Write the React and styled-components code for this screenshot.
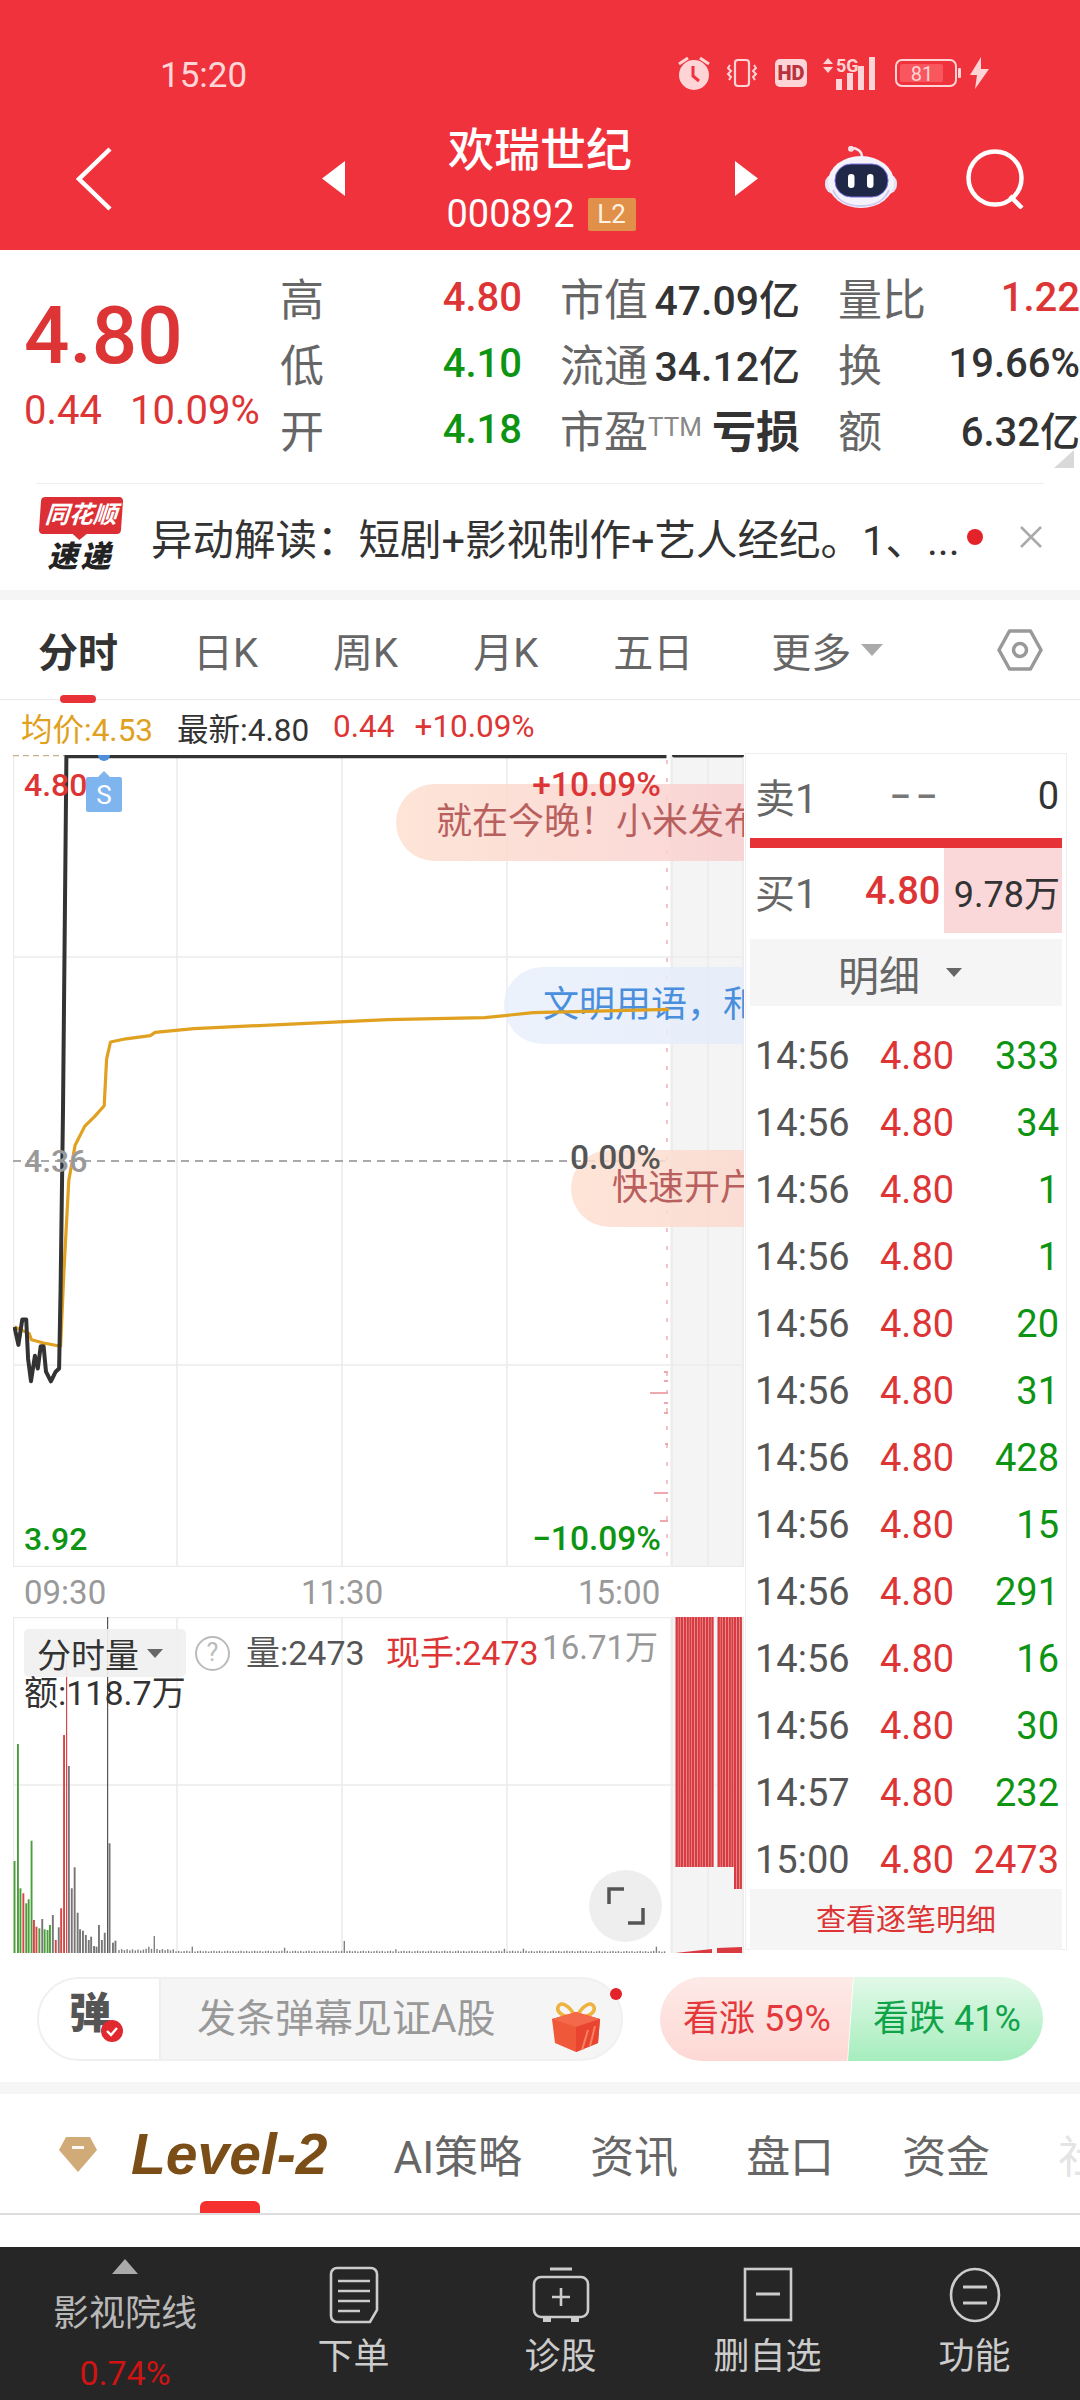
import React from "react";
import styled, { createGlobalStyle } from "styled-components";

const RED = "#dd3535";
const GREEN = "#0d9412";
const FONT = `Roboto, "Noto Sans CJK SC", sans-serif`;

const Global = createGlobalStyle`
  html, body { margin: 0; padding: 0; background: #fff; }
  body { width: 1080px; height: 2400px; overflow: hidden; font-family: ${FONT}; }
  * { box-sizing: border-box; }
`;

const Page = styled.div`
  width: 1080px;
  height: 2400px;
  display: flex;
  flex-direction: column;
  background: #fff;
  overflow: hidden;
`;

/* ---------- header ---------- */
const Header = styled.header`
  height: 250px;
  flex: none;
  background: #f0323c;
  color: #fff;
`;
const StatusBar = styled.div`
  height: 36px;
  margin-top: 55px;
  padding-left: 160px;
  display: flex;
  align-items: center;
`;
const StatusTime = styled.span`
  font-size: 35px;
  line-height: 36px;
  color: #ffd6d8;
  padding-top: 6px;
`;
const StatusIcons = styled.div`
  margin-left: 430px;
  display: flex;
  align-items: center;
`;
const NavBar = styled.div`
  height: 107px;
  margin-top: 34px;
  padding-left: 76px;
  display: flex;
  align-items: center;
`;
const TitleBlock = styled.div`
  width: 390px;
  display: flex;
  flex-direction: column;
  align-items: center;
`;
const Title = styled.div`
  font-size: 46px;
  line-height: 50px;
  font-weight: 500;
`;
const CodeRow = styled.div`
  margin-top: 21px;
  height: 36px;
  display: flex;
  align-items: center;
  gap: 13px;
  font-size: 38px;
  color: #fff;
  padding-left: 2px;
`;
const L2Badge = styled.span`
  width: 48px;
  height: 33px;
  background: #e09048;
  border-radius: 2px;
  font-size: 26px;
  line-height: 33px;
  text-align: center;
  color: #fff2e2;
`;
const NavSlot = styled.div`
  flex: none;
  margin-left: ${(p) => p.$ml || 0}px;
  display: flex;
`;

/* ---------- quote ---------- */
const Quote = styled.section`
  flex: none;
  height: 233px;
  padding-top: 14px;
  display: flex;
  position: relative;
  &::after {
    content: "";
    position: absolute;
    right: 6px;
    bottom: 15px;
    width: 20px;
    height: 18px;
    background: #d9d9d9;
    clip-path: polygon(100% 0, 100% 100%, 0 100%);
  }
`;
const PriceBlock = styled.div`
  width: 280px;
  flex: none;
  padding: 32px 0 0 24px;
  color: ${RED};
`;
const BigPrice = styled.div`
  font-size: 80px;
  line-height: 80px;
  font-weight: 500;
`;
const PriceSub = styled.div`
  margin-top: 15px;
  display: flex;
  gap: 28px;
  font-size: 40px;
  line-height: 40px;
  white-space: nowrap;
`;
const StatGrid = styled.div`
  flex: 1;
  display: grid;
  grid-template-columns: 242px 240px 242px;
  column-gap: 38px;
  grid-auto-rows: 66px;
`;
const Stat = styled.div`
  display: flex;
  justify-content: space-between;
  align-items: center;
  white-space: nowrap;
  overflow: visible;
`;
const StatLabel = styled.span`
  font-size: 44px;
  color: #666;
  sup {
    font-size: 26px;
    color: #888;
    vertical-align: 12px;
    line-height: 0;
  }
`;
const StatValue = styled.span`
  font-size: ${(p) => p.$size || 40}px;
  font-weight: ${(p) => p.$weight || 500};
  color: ${(p) => p.$color || "#333"};
`;
const Divider = styled.div`
  height: 1px;
  margin: 0 36px;
  background: #eee;
  flex: none;
`;
const News = styled.div`
  height: 106px;
  flex: none;
  padding-left: 36px;
  display: flex;
  align-items: center;
  position: relative;
`;
const NewsLogo = styled.div`
  width: 89px;
  height: 80px;
  flex: none;
  display: flex;
  flex-direction: column;
  align-items: center;
  margin-right: 26px;
`;
const LogoTop = styled.div`
  width: 82px;
  height: 37px;
  flex: none;
  position: relative;
  background: #dc2f35;
  border-radius: 4px;
  transform: skewX(-4deg);
  color: #fff;
  font-size: 24px;
  line-height: 37px;
  font-weight: 700;
  font-style: italic;
  text-align: center;
  white-space: nowrap;
  &::after {
    content: "";
    position: absolute;
    left: 34px;
    bottom: -6px;
    border-left: 7px solid transparent;
    border-right: 7px solid transparent;
    border-top: 6px solid #dc2f35;
  }
`;
const LogoBottom = styled.div`
  margin-top: 4px;
  color: #222;
  font-size: 30px;
  line-height: 38px;
  letter-spacing: 3px;
  font-weight: 900;
  font-style: italic;
`;
const NewsText = styled.div`
  font-size: 41.5px;
  color: #333;
  white-space: nowrap;
  width: 812px;
`;
const NewsDot = styled.i`
  width: 16px;
  height: 16px;
  border-radius: 50%;
  background: #e4222a;
  margin-left: 4px;
  flex: none;
`;
const NewsClose = styled.span`
  margin-left: 36px;
  display: flex;
`;
const GreyGap = styled.div`
  height: ${(p) => p.$h}px;
  flex: none;
  background: #f5f5f5;
`;

/* ---------- period tabs ---------- */
const PeriodTabs = styled.nav`
  height: 100px;
  flex: none;
  padding: 0 37px 0 38px;
  display: flex;
  align-items: center;
  gap: 75px;
  border-bottom: 1px solid #eaeaea;
  position: relative;
  font-size: 40px;
  color: #666;
`;
const PeriodTab = styled.span`
  position: relative;
  font-weight: ${(p) => (p.$active ? 700 : 400)};
  color: ${(p) => (p.$active ? "#333" : "#666")};
  white-space: nowrap;
  display: flex;
  align-items: center;
  gap: 10px;
  ${(p) =>
    p.$active &&
    `&::after{content:"";position:absolute;left:22px;bottom:-24px;width:36px;height:8px;border-radius:4px;background:#e83238;}`}
`;
const MoreTab = styled(PeriodTab)`
  margin-left: 3px;
`;
const DownTri = styled.i`
  width: 0;
  height: 0;
  border-left: ${(p) => p.$s}px solid transparent;
  border-right: ${(p) => p.$s}px solid transparent;
  border-top: ${(p) => p.$s * 1.15}px solid ${(p) => p.$c || "#999"};
  display: inline-block;
`;
const Gear = styled.span`
  margin-left: auto;
  display: flex;
`;

/* ---------- chart ---------- */
const Legend = styled.div`
  height: 53px;
  flex: none;
  padding-left: 21px;
  display: flex;
  align-items: center;
  font-size: 31.5px;
  white-space: nowrap;
`;
const LegendItem = styled.span`
  color: ${(p) => p.$c};
  margin-left: ${(p) => p.$ml || 0}px;
`;
const ChartRow = styled.div`
  height: 1200px;
  flex: none;
  display: flex;
`;
const ChartCol = styled.div`
  width: 745px;
  flex: none;
  padding: 2px 1px 0 13px;
  display: flex;
  flex-direction: column;
`;
const Canvas = styled.div`
  position: relative;
  height: ${(p) => p.$h}px;
  flex: none;
  overflow: hidden;
  > svg {
    position: absolute;
    left: 0;
    top: 0;
  }
`;
const Lbl = styled.span`
  position: absolute;
  left: ${(p) => p.$x - 13}px;
  top: ${(p) => p.$y}px;
  font-size: ${(p) => p.$size || 32}px;
  line-height: 36px;
  transform: translateY(-50%);
  color: ${(p) => p.$c};
  font-weight: ${(p) => p.$w || 500};
  white-space: nowrap;
`;
const RLbl = styled(Lbl)`
  left: auto;
  right: ${(p) => 744 - p.$x}px;
`;
const Pill = styled.div`
  position: absolute;
  left: ${(p) => p.$x - 13}px;
  top: ${(p) => p.$y}px;
  width: 500px;
  height: 77px;
  border-radius: 39px;
  padding-left: ${(p) => p.$pad}px;
  font-size: 36px;
  line-height: 77px;
  white-space: nowrap;
  color: ${(p) => p.$c};
  background: ${(p) => p.$bg};
`;
const SBadge = styled.div`
  position: absolute;
  left: 73px;
  top: 22px;
  width: 36px;
  height: 35px;
  background: #7fb5ef;
  border-radius: 2px;
  color: #fff;
  font-size: 26px;
  line-height: 37px;
  text-align: center;
  &::before {
    content: "";
    position: absolute;
    left: 12px;
    top: -6px;
    border-left: 6px solid transparent;
    border-right: 6px solid transparent;
    border-bottom: 6px solid #7fb5ef;
  }
`;
const TimeAxis = styled.div`
  height: 50px;
  flex: none;
  display: flex;
  align-items: center;
  padding-left: 11px;
  font-size: 33px;
  color: #999;
  span {
    width: ${(p) => p.$w}px;
    flex: none;
  }
`;
const VolSelect = styled.div`
  position: absolute;
  left: 11px;
  top: 12px;
  width: 162px;
  height: 48px;
  background: rgba(240, 240, 240, 0.92);
  border-radius: 5px;
  display: flex;
  align-items: center;
  padding-left: 13px;
  gap: 8px;
  font-size: 34px;
  color: #333;
`;
const HelpMark = styled.span`
  position: absolute;
  left: 182px;
  top: 19px;
  width: 35px;
  height: 35px;
  border-radius: 50%;
  border: 2.5px solid #bbb;
  color: #bbb;
  font-size: 25px;
  line-height: 30px;
  text-align: center;
`;
const Expand = styled.div`
  position: absolute;
  left: 576px;
  top: 253px;
  width: 73px;
  height: 72px;
  border-radius: 50%;
  background: #eeeeee;
  display: flex;
  align-items: center;
  justify-content: center;
`;

/* ---------- order panel ---------- */
const Panel = styled.aside`
  width: 322px;
  flex: none;
  height: 1197px;
  border: 1px solid #eee;
  padding: 0 4px;
  display: flex;
  flex-direction: column;
  font-size: 38px;
`;
const QuoteLine = styled.div`
  height: ${(p) => p.$h}px;
  flex: none;
  display: flex;
  align-items: center;
  padding-left: 5px;
  color: #666;
`;
const QuoteName = styled.span`
  font-size: 40px;
  width: ${(p) => p.$w}px;
  flex: none;
`;
const Dash = styled.span`
  color: #777;
  font-size: 32px;
  font-weight: 700;
  letter-spacing: 6px;
`;
const QuoteQty = styled.span`
  margin-left: auto;
  padding-right: 3px;
  color: #333;
`;
const QuotePrice = styled.span`
  color: ${RED};
  font-weight: 500;
  flex: none;
  width: 79px;
`;
const BidQty = styled.span`
  flex: 1;
  height: 100%;
  background: #fad7d8;
  display: flex;
  align-items: center;
  justify-content: flex-end;
  padding-right: 2px;
  color: #333;
  font-size: 36px;
  white-space: nowrap;
`;
const RedBar = styled.div`
  height: 10px;
  flex: none;
  background: #e63337;
`;
const DetailHead = styled.div`
  margin-top: 6px;
  height: 67px;
  flex: none;
  background: #f5f5f5;
  display: flex;
  align-items: center;
  justify-content: center;
  gap: 26px;
  font-size: 41px;
  color: #666;
  padding-right: 12px;
`;
const Ticks = styled.div`
  margin-top: 16px;
  flex: none;
`;
const Tick = styled.div`
  height: 67px;
  display: grid;
  grid-template-columns: 125px 64px 1fr;
  align-items: center;
  padding: 0 3px 0 5px;
  font-size: 38px;
  color: #555;
`;
const TickNum = styled.span`
  color: ${(p) => p.$c};
  text-align: ${(p) => p.$al || "left"};
`;
const MoreLink = styled.div`
  margin-top: -4px;
  height: 61px;
  flex: none;
  background: #f5f5f5;
  color: ${RED};
  font-size: 30px;
  line-height: 61px;
  text-align: center;
`;

/* ---------- barrage ---------- */
const Barrage = styled.div`
  height: 129px;
  flex: none;
  padding: 24px 37px 0;
  display: flex;
`;
const InputPill = styled.div`
  width: 586px;
  height: 84px;
  flex: none;
  border: 2px solid #f0f0f0;
  border-radius: 42px;
  display: flex;
  position: relative;
  background: #f5f5f5;
  &::after {
    content: "";
    position: absolute;
    right: -1px;
    top: 9px;
    width: 12px;
    height: 12px;
    border-radius: 50%;
    background: #e4222a;
  }
`;
const DanBox = styled.div`
  width: 122px;
  flex: none;
  background: #fff;
  border-radius: 42px 0 0 42px;
  border-right: 2px solid #eee;
  position: relative;
  font-size: 42px;
  font-weight: 900;
  color: #555;
  padding: 10px 0 0 30px;
  line-height: 50px;
  svg {
    position: absolute;
    left: 62px;
    top: 41px;
  }
`;
const InputText = styled.div`
  margin-left: 36px;
  font-size: 39px;
  line-height: 80px;
  color: #999;
  white-space: nowrap;
`;
const GiftSlot = styled.div`
  margin-left: auto;
  margin-right: 21px;
  margin-top: 23px;
  display: flex;
`;
const Sentiment = styled.div`
  margin-left: 37px;
  width: 383px;
  height: 84px;
  display: flex;
  position: relative;
`;
const Bull = styled.div`
  width: 193px;
  height: 84px;
  background: linear-gradient(#fdeae7, #fdd8d4);
  border-radius: 42px 0 0 42px;
  clip-path: polygon(0 0, 100% 0, 97% 100%, 0 100%);
  color: #e4393c;
  font-size: 36px;
  line-height: 84px;
  padding-left: 23px;
  white-space: nowrap;
`;
const Bear = styled.div`
  width: 195px;
  height: 84px;
  margin-left: -5px;
  background: linear-gradient(#e2f9e8, #a6edbd);
  border-radius: 0 42px 42px 0;
  clip-path: polygon(3% 0, 100% 0, 100% 100%, 0 100%);
  color: #10a34a;
  font-size: 36px;
  line-height: 84px;
  padding-left: 25px;
  white-space: nowrap;
`;

/* ---------- info tabs ---------- */
const InfoTabs = styled.nav`
  height: 121px;
  flex: none;
  border-bottom: 2px solid #ddd;
  padding-left: 58px;
  display: flex;
  align-items: center;
  position: relative;
  overflow: hidden;
  &::after {
    content: "";
    position: absolute;
    left: 200px;
    bottom: 0;
    width: 60px;
    height: 12px;
    border-radius: 6px 6px 0 0;
    background: #f5302f;
  }
`;
const LevelTwo = styled.span`
  margin-left: 33px;
  font-family: "Liberation Sans", sans-serif;
  font-size: 57px;
  font-weight: 700;
  font-style: italic;
  color: #7a4e16;
  white-space: nowrap;
`;
const InfoTab = styled.span`
  flex: none;
  margin-left: ${(p) => p.$ml}px;
  font-size: 44px;
  color: ${(p) => p.$c || "#666"};
  white-space: nowrap;
`;

/* ---------- bottom bar ---------- */
const BottomBar = styled.footer`
  margin-top: 32px;
  height: 153px;
  flex: none;
  background: #262626;
  display: flex;
  color: #ccc;
`;
const IndexCell = styled.div`
  width: 250px;
  flex: none;
  display: flex;
  flex-direction: column;
  align-items: center;
`;
const UpTri = styled.i`
  margin-top: 12px;
  border-left: 13px solid transparent;
  border-right: 13px solid transparent;
  border-bottom: 15px solid #aaa;
`;
const IndexName = styled.div`
  margin-top: 17px;
  font-size: 36px;
  line-height: 46px;
  color: #b8b8b8;
`;
const IndexPct = styled.div`
  margin-top: 16px;
  font-size: 34px;
  line-height: 40px;
  color: #d01313;
`;
const Action = styled.div`
  width: 207px;
  flex: none;
  display: flex;
  flex-direction: column;
  align-items: center;
  padding-top: 19px;
`;
const ActionText = styled.div`
  font-size: 36px;
  line-height: 46px;
  margin-top: 10px;
  color: #ccc;
`;

/* ---------- helpers ---------- */
const zx = (x) => +(x / 2.063).toFixed(1);
const zy = (y) => +(600 + y / 1.568).toFixed(1);
const vy = (y) => +(1580 + y / 3).toFixed(1);
const pts = (a) => a.map(([x, y]) => `${zx(x)},${zy(y)}`).join(" ");

const priceLine = [
  [30, 1140], [38, 1168], [46, 1128], [54, 1128], [58, 1190], [64, 1225], [72, 1185], [78, 1205],
  [84, 1170], [90, 1170], [95, 1210], [105, 1225], [115, 1210], [122, 1205], [125, 1080], [130, 800],
  [137, 245], [1375, 245],
];
const avgLine = [
  [30, 1140], [60, 1150], [65, 1160], [90, 1165], [125, 1170], [132, 1050], [142, 910], [155, 855],
  [175, 825], [195, 810], [215, 793], [220, 720], [228, 693], [260, 688], [310, 683], [320, 678],
  [400, 672], [600, 665], [800, 658], [1000, 655], [1100, 647], [1380, 642],
];
const volBars = [
  [30, 843, "g"], [37, 492, "g"], [42, 925, "g"], [48, 940, "r"], [54, 970, "g"], [59, 958, "g"], [65, 782, "g"],
  [70, 1020, "r"], [75, 1040, "r"], [81, 1045, "g"], [87, 1017, "k"], [92, 1048, "g"], [98, 1050, "g"],
  [103, 1035, "g"], [109, 1005, "k"], [115, 1080, "r"], [121, 1042, "k"], [126, 985, "r"], [132, 465, "r"],
  [142, 558, "k"], [148, 925, "k"], [154, 862, "k"], [160, 998, "k"], [165, 1048, "k"], [171, 1052, "k"],
  [177, 1065, "k"], [183, 1080, "k"], [188, 1070, "k"], [194, 1098, "k"], [199, 1100, "k"], [204, 1035, "k"],
  [210, 1080, "k"], [216, 1058, "k"], [226, 790, "k"], [233, 1088, "k"], [238, 1082, "k"],
];
const special = { 317: 1068, 708: 1083, 1355: 1100, 585: 1103, 395: 1100, 305: 1100, 1080: 1106, 1042: 1106, 813: 1108 };
const tinyBars = [];
for (let x = 244; x < 1375; x += 5.6) {
  const key = Object.keys(special).find((k) => Math.abs(+k - x) < 2.8);
  const base = x < 360 ? 1106 + ((x * 7) % 6) : 1112 + ((x * 3) % 3);
  tinyBars.push([x, key ? special[key] : base]);
}
const colors = { g: "#4c9e3c", r: "#d94545", k: "#777" };
const ticks = [
  ["14:56", 333], ["14:56", 34], ["14:56", 1], ["14:56", 1], ["14:56", 20], ["14:56", 31], ["14:56", 428],
  ["14:56", 15], ["14:56", 291], ["14:56", 16], ["14:56", 30], ["14:57", 232], ["15:00", 2473],
];
const ST = "#ffd4d6";

const MainGridArt = () => (
  <svg width="731" height="812" viewBox="13 755 731 812">
    <rect x="670" y="755" width="74" height="812" fill="#f4f4f4" />
    <g stroke="#ececec" strokeWidth="1.6" fill="none">
      <path d="M13.5 755V1567M177 755V1567M342 755V1567M507 755V1567M672 755V1567M708 755V1567M743 755V1567" />
      <path d="M13 957H744M13 1365H744M13 1566.5H744" />
    </g>
    <path d="M13 755.5H66" stroke="#c9b08a" strokeWidth="1.4" strokeDasharray="6 4" />
    <path d="M13 1161H670" stroke="#a9a9a9" strokeWidth="2" strokeDasharray="8 6" />
    <path d="M667 760V1567" stroke="#f2b5b8" strokeWidth="1.6" strokeDasharray="4 14" />
    <g fill="#efa9ac">
      <rect x="650" y="1392" width="18" height="2" />
      <rect x="654" y="1492" width="14" height="2" />
      <rect x="660" y="1520" width="8" height="2" />
      <rect x="664" y="1371" width="4" height="2" />
      <rect x="664" y="1380" width="4" height="2" />
      <rect x="664" y="1402" width="4" height="2" />
      <rect x="664" y="1412" width="4" height="2" />
      <rect x="665" y="1443" width="3" height="2" />
    </g>
  </svg>
);

const MainLineArt = () => (
  <svg width="731" height="812" viewBox="13 755 731 812">
    <polyline points={pts(avgLine)} fill="none" stroke="#e0a020" strokeWidth="3.2" strokeLinejoin="round" />
    <polyline points={pts(priceLine)} fill="none" stroke="#333" strokeWidth="4" strokeLinejoin="round" />
    <path d="M674 755.5H714M716 755.5H742" stroke="#333" strokeWidth="4" strokeLinecap="round" strokeDasharray="3 1" />
    <path d="M98 755a6 6 0 0 0 12 0z" fill="#4e8fdc" />
  </svg>
);

const VolArt = () => (
  <svg width="731" height="336" viewBox="13 1617 731 336">
    <rect x="670" y="1617" width="74" height="336" fill="#f4f4f4" />
    <g stroke="#ececec" strokeWidth="1.6" fill="none">
      <path d="M13.5 1617V1953M177 1617V1953M342 1617V1953M507 1617V1953M672 1617V1953M708 1617V1953M743 1617V1953" />
      <path d="M13 1617.5H744M13 1785H744" />
    </g>
    {volBars.map(([x, y, c], i) => (
      <rect key={i} x={zx(x) - 0.9} y={vy(y)} width="1.9" height={1953 - vy(y)} fill={colors[c]} />
    ))}
    {tinyBars.map(([x, y], i) => (
      <rect key={i} x={zx(x)} y={vy(y)} width="1.4" height={1953 - vy(y)} fill="#808080" />
    ))}
    <rect x="66" y="1660" width="1.2" height="293" fill="#d94545" />
    <rect x="107" y="1617" width="1.2" height="336" fill="#555" />
    {Array.from({ length: 14 }).map((_, i) => (
      <rect key={i} x={675.5 + i * 2.75} y="1617" width="2.4" height="250" fill="#d93a40" />
    ))}
    {Array.from({ length: 9 }).map((_, i) => (
      <rect key={i} x={717.5 + i * 2.75} y="1617" width="2.4" height={i > 5 ? 272 : 250} fill="#d93a40" />
    ))}
    <path d="M675 1953l37-4v4zM717 1953v-5l25-1v6z" fill="#d93a40" />
  </svg>
);

const Alarm = () => (
  <svg width="34" height="34" viewBox="0 0 34 34" style={{ marginRight: 15 }}>
    <circle cx="17" cy="19" r="15" fill={ST} />
    <path d="M16 10v10l6 5" stroke="#f0323c" strokeWidth="3" fill="none" />
    <path d="M2 8l9-6M32 8l-9-6" stroke={ST} strokeWidth="3" />
  </svg>
);
const Vibrate = () => (
  <svg width="32" height="30" viewBox="0 0 32 30" style={{ marginRight: 17 }}>
    <rect x="9" y="2" width="14" height="26" rx="3" fill="none" stroke={ST} strokeWidth="2.2" />
    <path d="M4 7l-2 3 3 3-3 3 3 3-2 3M28 7l2 3-3 3 3 3-3 3 2 3" fill="none" stroke={ST} strokeWidth="2" />
  </svg>
);
const HD = () => (
  <svg width="32" height="28" viewBox="0 0 32 28" style={{ marginRight: 11 }}>
    <rect width="32" height="28" rx="5" fill={ST} />
    <text x="16" y="21" textAnchor="middle" fontFamily="Roboto" fontWeight="900" fontSize="20" fill="#b8333e">HD</text>
  </svg>
);
const Signal = () => (
  <svg width="62" height="34" viewBox="0 0 62 34" style={{ marginRight: 15 }}>
    <path d="M5 8l5-6 5 6zM5 11l5 6 5-6z" fill={ST} />
    <text x="18" y="16" fontFamily="Roboto" fontWeight="700" fontSize="18" fill={ST}>5G</text>
    <rect x="18" y="23" width="6" height="11" fill={ST} />
    <rect x="29" y="17" width="6" height="17" fill={ST} />
    <rect x="40" y="10" width="6" height="24" fill={ST} />
    <rect x="51" y="1" width="6" height="33" fill={ST} />
  </svg>
);
const Battery = () => (
  <svg width="66" height="30" viewBox="0 0 66 30" style={{ marginRight: 9 }}>
    <rect x="1" y="2" width="60" height="26" rx="6" fill="none" stroke={ST} strokeWidth="2" />
    <rect x="5" y="6" width="43" height="18" rx="2" fill="#f9575f" />
    <rect x="63" y="10" width="3" height="10" rx="1" fill={ST} />
    <text x="27" y="23" textAnchor="middle" fontFamily="Roboto" fontSize="20" fill={ST}>81</text>
  </svg>
);
const Bolt = () => (
  <svg width="19" height="32" viewBox="0 0 19 32">
    <path d="M11 0L0 18h7l-2 14 14-20h-8z" fill={ST} />
  </svg>
);
const Robot = () => (
  <svg width="72" height="66" viewBox="0 0 72 66">
    <path d="M26 2c6 0 11 3 11 9" fill="none" stroke="#f6e6ee" strokeWidth="2.4" />
    <circle cx="26" cy="2.8" r="3" fill="#f6dfe8" />
    <rect x="0" y="28" width="72" height="20" rx="9" fill="#e6e2f6" />
    <ellipse cx="36" cy="36" rx="33" ry="26" fill="#f4f3fc" />
    <path d="M8 44c4 10 14 16 28 16s24-6 28-16" fill="none" stroke="#cfc8ef" strokeWidth="2" />
    <rect x="10" y="18" width="53" height="33" rx="16" fill="#1f2947" stroke="#7c6ee0" strokeWidth="1" />
    <rect x="23" y="28" width="6.5" height="14" rx="3.2" fill="#fff" />
    <rect x="42" y="28" width="6.5" height="14" rx="3.2" fill="#fff" />
  </svg>
);
const Gift = () => (
  <svg width="48" height="50" viewBox="0 0 48 50">
    <path d="M24 16C17 2 8 -1 6 5c-2 7 9 11 18 11zM24 16C31 2 40 -1 42 5c2 7-9 11-18 11z" fill="none" stroke="#eeb33f" strokeWidth="3.6" />
    <path d="M0 17L24 10l24 7-2 24-22 9-21-9z" fill="#f0583a" />
    <path d="M0 17l24 8 24-8-24-7z" fill="#f4694a" />
    <path d="M24 25v25l22-9 2-24z" fill="#e8442f" />
    <path d="M30 48l6-20M38 44l5-20" stroke="#f8825f" strokeWidth="2" />
  </svg>
);

export default function App() {
  return (
    <Page>
      <Global />
      <Header>
        <StatusBar>
          <StatusTime>15:20</StatusTime>
          <StatusIcons>
            <Alarm />
            <Vibrate />
            <HD />
            <Signal />
            <Battery />
            <Bolt />
          </StatusIcons>
        </StatusBar>
        <NavBar>
          <NavSlot>
            <svg width="36" height="64" viewBox="0 0 36 64">
              <path d="M34 2L3 32l31 30" fill="none" stroke="#fff" strokeWidth="4.5" />
            </svg>
          </NavSlot>
          <NavSlot $ml={210}>
            <svg width="23" height="35" viewBox="0 0 23 35"><path d="M23 0v35L0 17.5z" fill="#fff" /></svg>
          </NavSlot>
          <TitleBlock>
            <Title>欢瑞世纪</Title>
            <CodeRow>
              000892
              <L2Badge>L2</L2Badge>
            </CodeRow>
          </TitleBlock>
          <NavSlot>
            <svg width="23" height="35" viewBox="0 0 23 35"><path d="M0 0v35l23-17.5z" fill="#fff" /></svg>
          </NavSlot>
          <NavSlot $ml={67}>
            <Robot />
          </NavSlot>
          <NavSlot $ml={69}>
            <svg width="60" height="60" viewBox="0 0 60 60">
              <circle cx="29" cy="29" r="26.5" fill="none" stroke="#fff" strokeWidth="4.5" />
              <path d="M44 47l12 12" stroke="#fff" strokeWidth="4.5" />
            </svg>
          </NavSlot>
        </NavBar>
      </Header>

      <Quote>
        <PriceBlock>
          <BigPrice>4.80</BigPrice>
          <PriceSub>
            <span>0.44</span>
            <span>10.09%</span>
          </PriceSub>
        </PriceBlock>
        <StatGrid>
          <Stat><StatLabel>高</StatLabel><StatValue $color={RED}>4.80</StatValue></Stat>
          <Stat><StatLabel>市值</StatLabel><StatValue $size={41}>47.09亿</StatValue></Stat>
          <Stat><StatLabel>量比</StatLabel><StatValue $color={RED}>1.22</StatValue></Stat>
          <Stat><StatLabel>低</StatLabel><StatValue $color={GREEN}>4.10</StatValue></Stat>
          <Stat><StatLabel>流通</StatLabel><StatValue $size={41}>34.12亿</StatValue></Stat>
          <Stat><StatLabel>换</StatLabel><StatValue>19.66%</StatValue></Stat>
          <Stat><StatLabel>开</StatLabel><StatValue $color={GREEN}>4.18</StatValue></Stat>
          <Stat><StatLabel>市盈<sup>TTM</sup></StatLabel><StatValue $size={44} $weight={700}>亏损</StatValue></Stat>
          <Stat><StatLabel>额</StatLabel><StatValue>6.32亿</StatValue></Stat>
        </StatGrid>
      </Quote>
      <Divider />
      <News>
        <NewsLogo>
          <LogoTop>同花顺</LogoTop>
          <LogoBottom>速递</LogoBottom>
        </NewsLogo>
        <NewsText>异动解读：短剧+影视制作+艺人经纪。1、...</NewsText>
        <NewsDot />
        <NewsClose>
          <svg width="24" height="24" viewBox="0 0 24 24">
            <path d="M2 2l20 20M22 2L2 22" stroke="#aaa" strokeWidth="2.5" />
          </svg>
        </NewsClose>
      </News>
      <GreyGap $h={10} />

      <PeriodTabs>
        <PeriodTab $active>分时</PeriodTab>
        <PeriodTab>日K</PeriodTab>
        <PeriodTab>周K</PeriodTab>
        <PeriodTab>月K</PeriodTab>
        <PeriodTab>五日</PeriodTab>
        <MoreTab>更多<DownTri $s={11} $c="#aaa" /></MoreTab>
        <Gear>
          <svg width="46" height="46" viewBox="0 0 46 46">
            <path d="M12.5 4h21L44 23 33.5 42h-21L2 23z" fill="none" stroke="#999" strokeWidth="3.5" strokeLinejoin="round" />
            <circle cx="23" cy="23" r="6.5" fill="none" stroke="#999" strokeWidth="3.5" />
          </svg>
        </Gear>
      </PeriodTabs>

      <Legend>
        <LegendItem $c="#e0a020">均价:4.53</LegendItem>
        <LegendItem $c="#333" $ml={24}>最新:4.80</LegendItem>
        <LegendItem $c={RED} $ml={24}>0.44</LegendItem>
        <LegendItem $c={RED} $ml={20}>+10.09%</LegendItem>
      </Legend>

      <ChartRow>
        <ChartCol>
          <Canvas $h={812}>
            <MainGridArt />
            <Pill $x={396} $y={29} $pad={40} $c="#b9605f" $bg="linear-gradient(90deg, rgba(253,224,208,.85), rgba(247,200,208,.85))">就在今晚！小米发布</Pill>
            <Pill $x={504} $y={212} $pad={39} $c="#4a8fdd" $bg="linear-gradient(90deg, rgba(232,240,252,.85), rgba(224,232,246,.85))">文明用语，和谐</Pill>
            <Pill $x={571} $y={395} $pad={41} $c="#b9605f" $bg="linear-gradient(90deg, rgba(253,224,208,.85), rgba(247,205,205,.85))">快速开户</Pill>
            <MainLineArt />
            <Lbl $x={24} $y={30} $c={RED}>4.80</Lbl>
            <RLbl $x={661} $y={30} $size={33.5} $c={RED}>+10.09%</RLbl>
            <Lbl $x={24} $y={406} $c="#999">4.36</Lbl>
            <RLbl $x={661} $y={403} $size={33.5} $c="#555">0.00%</RLbl>
            <Lbl $x={24} $y={784} $c={GREEN}>3.92</Lbl>
            <RLbl $x={661} $y={784} $size={33.5} $c={GREEN}>−10.09%</RLbl>
            <SBadge>S</SBadge>
          </Canvas>
          <TimeAxis $w={277}>
            <span>09:30</span>
            <span>11:30</span>
            <span>15:00</span>
          </TimeAxis>
          <Canvas $h={336}>
            <VolArt />
            <VolSelect>分时量<DownTri $s={8} $c="#666" /></VolSelect>
            <HelpMark>?</HelpMark>
            <Lbl $x={246} $y={36} $size={34} $c="#555" $w={400}>量:2473</Lbl>
            <Lbl $x={386} $y={36} $size={34} $c={RED} $w={400}>现手:2473</Lbl>
            <RLbl $x={658} $y={31} $size={33} $c="#999" $w={400}>16.71万</RLbl>
            <Lbl $x={24} $y={76} $size={34} $c="#333" $w={400}>额:118.7万</Lbl>
            <Expand>
              <svg width="38" height="38" viewBox="0 0 38 38">
                <path d="M2 17V2h15M36 21v15H21" fill="none" stroke="#555" strokeWidth="3.5" />
              </svg>
            </Expand>
          </Canvas>
        </ChartCol>
        <Panel>
          <QuoteLine $h={84}>
            <QuoteName $w={135}>卖1</QuoteName>
            <Dash>––</Dash>
            <QuoteQty>0</QuoteQty>
          </QuoteLine>
          <RedBar />
          <QuoteLine $h={85}>
            <QuoteName $w={110}>买1</QuoteName>
            <QuotePrice>4.80</QuotePrice>
            <BidQty>9.78万</BidQty>
          </QuoteLine>
          <DetailHead>明细<DownTri $s={8} $c="#666" /></DetailHead>
          <Ticks>
            {ticks.map(([t, v], i) => (
              <Tick key={i}>
                <span>{t}</span>
                <TickNum $c={RED}>4.80</TickNum>
                <TickNum $c={i === 12 ? RED : GREEN} $al="right">{v}</TickNum>
              </Tick>
            ))}
          </Ticks>
          <MoreLink>查看逐笔明细</MoreLink>
        </Panel>
      </ChartRow>

      <Barrage>
        <InputPill>
          <DanBox>
            弹
            <svg width="22" height="22" viewBox="0 0 22 22">
              <circle cx="11" cy="11" r="11" fill="#e0282e" />
              <path d="M6 11l4 4 6-7" stroke="#fff" strokeWidth="2.4" fill="none" />
            </svg>
          </DanBox>
          <InputText>发条弹幕见证A股</InputText>
          <GiftSlot>
            <Gift />
          </GiftSlot>
        </InputPill>
        <Sentiment>
          <Bull>看涨 59%</Bull>
          <Bear>看跌 41%</Bear>
        </Sentiment>
      </Barrage>
      <GreyGap $h={12} />

      <InfoTabs>
        <svg width="40" height="36" viewBox="0 0 40 36" style={{ flex: "none" }}>
          <path d="M8 1h24l7 13-19 22L1 14z" fill="#d0ab78" />
          <rect x="14" y="10" width="12" height="3" fill="#fff" opacity=".9" />
        </svg>
        <LevelTwo>Level-2</LevelTwo>
        <InfoTab $ml={66}>AI策略</InfoTab>
        <InfoTab $ml={68}>资讯</InfoTab>
        <InfoTab $ml={68}>盘口</InfoTab>
        <InfoTab $ml={68}>资金</InfoTab>
        <InfoTab $ml={68} $c="#e4e4e4">社区</InfoTab>
      </InfoTabs>

      <BottomBar>
        <IndexCell>
          <UpTri />
          <IndexName>影视院线</IndexName>
          <IndexPct>0.74%</IndexPct>
        </IndexCell>
        <Action>
          <svg width="50" height="58" viewBox="0 0 50 58">
            <path d="M8 2h34a6 6 0 0 1 6 6v36l-7 12H8a6 6 0 0 1-6-6V8a6 6 0 0 1 6-6z" fill="none" stroke="#ccc" strokeWidth="2.6" />
            <path d="M9 15h32M9 25h32M9 35h32M9 45h22" stroke="#ccc" strokeWidth="2.6" />
          </svg>
          <ActionText>下单</ActionText>
        </Action>
        <Action>
          <svg width="58" height="58" viewBox="0 0 58 58">
            <path d="M18 3h22" stroke="#ccc" strokeWidth="3" />
            <rect x="2" y="11" width="54" height="40" rx="7" fill="none" stroke="#ccc" strokeWidth="2.6" />
            <path d="M29 22v18M20 31h18" stroke="#ccc" strokeWidth="2.6" />
            <path d="M11 51v5h8v-5M39 51v5h8v-5" fill="#ccc" />
          </svg>
          <ActionText>诊股</ActionText>
        </Action>
        <Action>
          <svg width="50" height="58" viewBox="0 0 50 58">
            <rect x="2" y="3" width="46" height="51" fill="none" stroke="#ccc" strokeWidth="2.6" />
            <path d="M13 28h24" stroke="#ccc" strokeWidth="3" />
          </svg>
          <ActionText>删自选</ActionText>
        </Action>
        <Action>
          <svg width="52" height="58" viewBox="0 0 52 58">
            <ellipse cx="26" cy="29" rx="24" ry="26" fill="none" stroke="#ccc" strokeWidth="2.6" />
            <path d="M14 21h24M14 37h24" stroke="#ccc" strokeWidth="3" />
          </svg>
          <ActionText>功能</ActionText>
        </Action>
      </BottomBar>
    </Page>
  );
}
